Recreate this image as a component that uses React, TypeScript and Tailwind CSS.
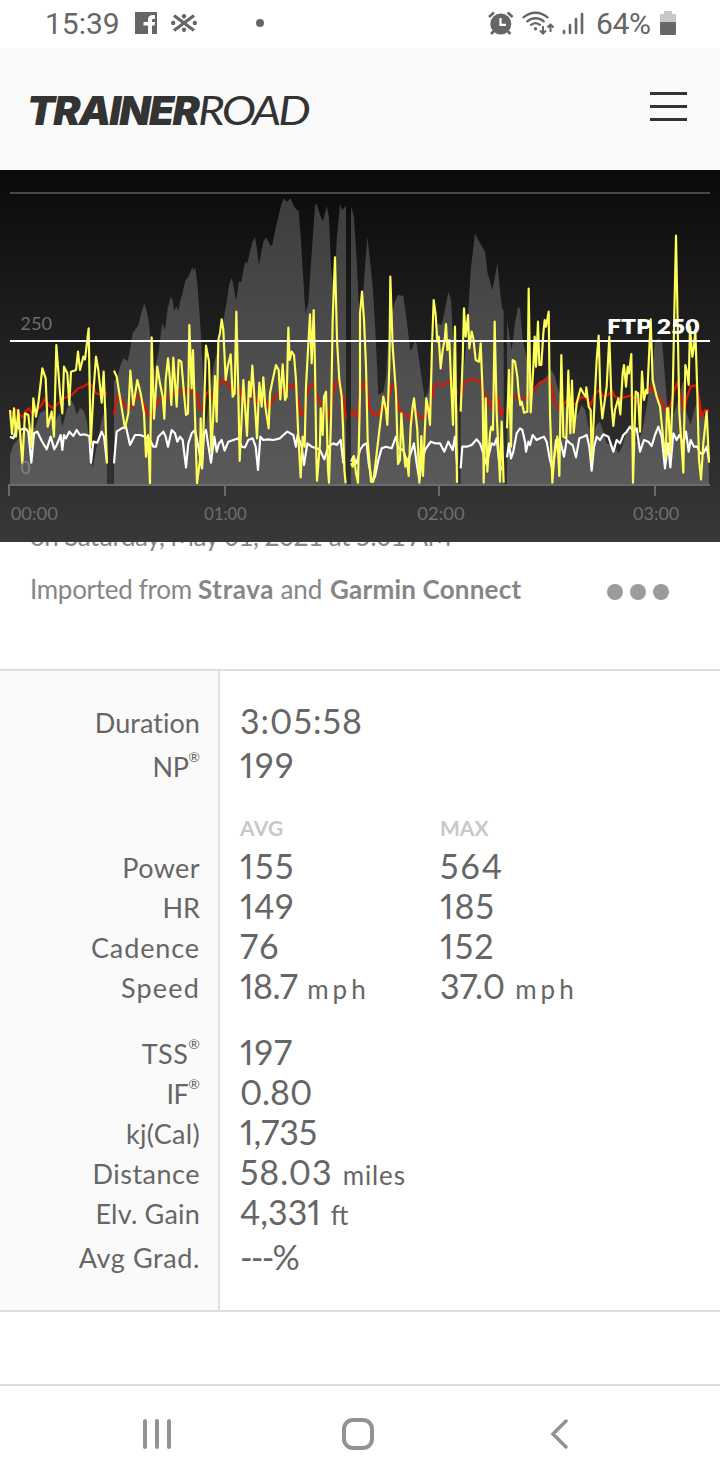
const elevation = [
  '30,912 30,825 40,795 60,770 75,740 95,745 105,745 120,700 135,690 150,720 160,740 172,712 180,700 187,742 200,690 213,660 222,675 230,705 240,685 250,690 260,720 270,800 278,865 290,800 305,720 315,690 321,680 321,912',
  '342,912 342,600 350,600 360,560 370,535 383,543 390,510 398,460 415,435 425,395 433,370 442,400 448,440 455,540 463,570 475,520 487,430 495,450 503,385 512,350 518,360 522,392 530,380 535,392 540,365 545,350 555,305 560,295 565,292 577,262 580,270 586,264 592,310 600,420 607,540 615,700 618,740 625,680 640,560 660,480 674,400 680,365 688,310 695,293 701,320 708,362 712,340 716,305 724,305 735,245 742,250 757,185 765,170 770,200 777,255 783,220 790,185 797,173 803,180 811,197 817,195 830,130 845,70 852,55 860,65 866,60 872,55 880,75 890,90 896,92 903,180 916,400 925,370 935,220 945,75 950,72 957,95 968,125 975,100 980,78 987,110 993,260 1003,350 1010,180 1020,72 1027,90 1038,77 1038,912',
  '1053,912 1053,80 1062,110 1070,240 1080,450 1090,330 1102,170 1110,240 1118,320 1125,430 1135,645 1150,635 1157,600 1170,420 1183,370 1193,345 1210,347 1220,420 1231,512 1237,505 1243,485 1250,490 1257,540 1274,655 1285,635 1295,540 1310,430 1325,435 1333,400 1345,335 1353,360 1360,490 1370,660 1375,700 1375,912',
  '1382,912 1382,650 1400,480 1412,270 1425,160 1435,180 1455,215 1463,280 1477,330 1485,290 1492,248 1500,330 1506,385 1511,390 1511,912',
  '1521,912 1521,420 1530,480 1535,510 1545,430 1554,380 1560,385 1568,480 1577,520 1590,600 1600,640 1620,610 1640,590 1655,570 1665,590 1672,620 1685,660 1700,690 1720,720 1735,700 1745,675 1755,690 1765,740 1780,760 1790,735 1800,725 1810,755 1820,790 1845,800 1855,820 1867,800 1880,750 1890,750 1910,790 1925,760 1940,680 1955,580 1965,480 1980,475 1987,490 2000,660 2010,720 2025,690 2040,640 2050,600 2060,700 2072,735 2080,700 2095,650 2105,700 2125,720 2127,912',
]

const heartRate = [
  '30,700 40,695 50,690 60,705 68,712 75,695 88,685 95,700 110,690 125,675 135,655 145,675 160,685 175,670 190,655 215,645 235,625 250,620 265,610 275,615 288,640 305,645 321,640',
  '342,705 352,645 362,650 375,680 390,685 400,670 412,650 422,650 435,680 448,712 460,700 470,670 480,655 495,658 515,640 540,635 550,625 560,640 575,630 590,640 600,690 610,685 618,640 628,635 640,660 650,625 660,610 670,600 680,610 690,625 705,625 718,625 730,670 740,665 750,640 760,635 770,670 780,640 790,660 800,665 810,685 820,655 830,645 845,630 855,640 865,620 880,615 888,625 895,670 903,705 912,700 920,640 930,620 942,610 950,650 962,670 975,680 982,690 990,715 998,640 1008,605 1018,615 1030,650 1038,715',
  '1053,705 1060,690 1066,700 1075,715 1080,640 1090,608 1100,615 1108,680 1120,705 1135,705 1145,680 1158,690 1168,645 1178,615 1188,620 1195,690 1205,695 1218,700 1230,722 1238,690 1250,700 1265,715 1280,700 1290,690 1300,625 1312,610 1325,615 1345,608 1353,600 1365,615 1371,640',
  '1382,660 1392,610 1405,600 1425,598 1440,605 1452,640 1462,660 1475,685 1485,640 1495,660 1503,705 1511,685',
  '1540,655 1555,645 1565,655 1580,655 1595,640 1608,620 1620,607 1635,600 1648,595 1656,625 1665,670 1680,690 1700,660 1715,675 1730,670 1745,650 1758,655 1772,675 1785,640 1798,630 1810,650 1825,645 1835,630 1845,650 1860,655 1880,650 1895,645 1910,665 1930,650 1945,635 1955,620 1970,645 1985,665 1998,695 2010,680 2020,640 2033,605 2043,655 2052,695 2060,655 2072,620 2088,615 2098,660 2105,710 2115,690 2127,692',
]

const cadence = [
  '30,770 40,775 52,735 60,750 75,745 85,755 94,848 102,760 112,755 125,782 140,808 152,770 163,808 170,795 182,765 187,810 192,765 198,775 208,755 220,768 230,750 240,765 252,763 268,768 273,848 280,785 292,788 305,755 312,770 321,850',
  '342,850 350,755 365,745 378,740 390,795 405,765 420,765 435,770 450,780 460,800 468,800 475,770 490,755 497,770 504,800 515,750 525,760 532,785 540,770 548,780 558,862 565,790 575,760 585,750 595,800 606,865 612,760 618,750 624,790 633,848 643,770 650,815 657,790 665,780 674,812 685,785 700,780 715,775 725,800 735,802 745,780 758,775 767,800 774,870 781,770 790,780 805,778 820,780 840,775 850,765 862,755 880,765 888,800 893,765 905,800 912,855 922,790 935,800 950,805 960,810 973,838 985,800 1000,790 1010,795 1022,780 1030,850',
  '1053,845 1060,830 1070,850 1080,810 1090,795 1100,790 1106,850 1116,905 1125,890 1135,840 1145,805 1158,800 1175,805 1188,770 1195,805 1210,810 1222,850 1232,820 1242,790 1250,850 1258,900 1265,850 1275,810 1292,785 1305,790 1320,790 1333,815 1345,785 1358,810 1365,770 1371,850',
  '1382,865 1387,800 1400,800 1415,795 1430,778 1440,790 1450,820 1457,850 1465,830 1475,790 1483,795 1490,775 1498,850 1505,870',
  '1521,832 1527,790 1533,835 1540,815 1550,760 1560,745 1567,750 1575,785 1578,815 1585,785 1590,795 1598,765 1610,780 1620,775 1632,770 1640,785 1650,840 1658,870 1668,780 1680,780 1692,830 1700,780 1710,790 1718,795 1728,832 1738,775 1750,770 1760,765 1768,800 1775,872 1782,800 1790,770 1800,780 1810,763 1825,770 1840,815 1850,780 1860,790 1870,765 1880,755 1890,740 1900,755 1910,745 1920,815 1932,780 1945,785 1955,798 1965,765 1975,740 1985,770 1995,865 2004,790 2011,862 2020,760 2030,780 2038,765 2050,790 2058,755 2066,815 2072,780 2082,800 2092,800 2100,820 2110,820 2120,800 2127,840',
]

const power = [
  '30,690 36,762 42,685 48,770 55,690 67,850 75,700 85,705 95,800 100,655 108,710 115,670 127,565 137,595 143,740 155,695 162,770 169,495 180,640 187,700 192,560 202,580 208,675 213,575 228,570 234,515 240,570 250,530 255,538 266,445 272,795 280,640 288,530 295,570 305,668 311,575 315,680 321,850',
  '342,572 350,590 358,640 375,745 385,700 391,572 400,675 412,600 422,640 432,700 438,830 444,765 450,910 455,472 462,716 472,560 480,610 488,650 493,716 497,600 504,535 510,600 514,675 520,533 530,680 536,540 544,545 552,640 558,705 564,700 568,435 575,625 579,510 591,910 600,840 602,715 606,860 610,760 618,497 627,545 634,815 640,700 645,588 650,725 655,480 660,460 665,418 670,450 677,600 683,560 692,523 698,650 704,640 709,395 715,640 719,843 730,600 741,768 747,605 752,650 757,557 765,680 771,775 778,608 785,680 790,592 796,680 806,745 810,640 820,590 828,555 836,570 841,658 848,553 855,660 860,650 865,443 869,540 875,515 882,525 888,600 895,770 902,892 908,770 914,800 918,620 924,510 930,403 935,550 941,390 945,560 949,830 951,902 960,790 962,685 968,765 972,650 978,635 984,870 987,908 993,720 998,420 1005,232 1011,480 1018,600 1025,650 1029,740 1033,870 1037,910',
  '1053,850 1058,860 1062,828 1068,880 1074,908 1080,640 1080,400 1086,335 1092,420 1098,560 1103,780 1113,905 1120,905 1130,820 1150,650 1158,690 1162,735 1168,560 1171,290 1178,500 1188,640 1194,852 1200,840 1204,700 1212,820 1216,860 1220,835 1226,888 1232,740 1238,680 1242,655 1252,750 1258,908 1264,768 1269,888 1274,760 1279,655 1285,690 1290,735 1296,500 1301,360 1307,405 1312,485 1316,470 1322,565 1328,510 1334,480 1338,432 1342,510 1348,480 1353,600 1359,735 1365,440 1371,908',
  '1382,695 1388,540 1392,385 1397,470 1404,405 1408,505 1415,455 1420,475 1427,540 1437,545 1442,490 1448,640 1451,908 1457,655 1462,875 1470,760 1474,740 1479,750 1484,425 1490,700 1500,905 1505,725 1511,908',
  '1521,745 1527,570 1533,800 1538,540 1545,545 1552,590 1556,640 1561,675 1565,665 1572,698 1582,695 1586,326 1592,697 1600,560 1604,470 1608,560 1614,425 1618,555 1624,555 1630,460 1634,420 1638,440 1646,395 1650,700 1657,908 1662,840 1672,770 1678,888 1684,525 1690,770 1699,775 1705,572 1711,760 1716,602 1721,758 1730,670 1742,625 1750,640 1757,650 1759,622 1766,680 1772,690 1775,840 1782,700 1790,540 1796,467 1801,640 1807,715 1820,620 1828,470 1835,680 1840,738 1845,690 1855,655 1861,703 1868,580 1872,555 1878,620 1883,560 1887,580 1894,522 1899,908 1907,635 1914,640 1920,755 1926,575 1932,660 1938,630 1942,640 1952,418 1958,600 1970,650 1980,680 1990,780 1997,835 2001,685 2005,685 2011,820 2018,650 2023,400 2028,167 2034,480 2038,700 2045,800 2050,878 2056,555 2062,580 2066,615 2070,440 2077,530 2082,500 2086,450 2092,640 2097,840 2103,898 2110,790 2120,695 2127,848',
]

const ticks = [
  { x: 27, label: '00:00', textX: 32, width: 142 },
  { x: 675, label: '01:00', textX: 613, width: 127 },
  { x: 1317, label: '02:00', textX: 1252, width: 142 },
  { x: 1965, label: '03:00', textX: 1899, width: 139 },
]

function Trace({ lines, color }: { lines: string[]; color: string }) {
  return (
    <g fill="none" stroke={color} strokeWidth="6.500" strokeLinejoin="round">
      {lines.map((points) => (
        <polyline key={points} points={points} />
      ))}
    </g>
  )
}

function RideChart() {
  return (
    <svg viewBox="0 -30 2160 1116" className="block h-[372px] w-full" fontFamily="Lato, sans-serif">
      <defs>
        <linearGradient id="chart-bg" x1="0" y1="0" x2="0" y2="1">
          <stop offset="0" stopColor="#0a0a0a" />
          <stop offset="1" stopColor="#383838" />
        </linearGradient>
      </defs>
      <rect y="-30" width="2160" height="1116" fill="url(#chart-bg)" />
      <path d="M30 39H2130" stroke="#484848" strokeWidth="6" />
      <g fill="#fff" fillOpacity="0.2">
        {elevation.map((points) => (
          <polygon key={points} points={points} />
        ))}
      </g>
      <Trace lines={heartRate} color="#e01505" />
      <Trace lines={cadence} color="#fff" />
      <Trace lines={power} color="#ffff59" />
      <path d="M24 915H2130" stroke="#6a6a6a" strokeWidth="6" />
      <g fill="#6e6e6e">
        {ticks.map((t) => (
          <g key={t.label}>
            <path d={`M${t.x} 912V948`} stroke="#6a6a6a" strokeWidth="6" />
            <text x={t.textX} y="1020" fontSize="50" textLength={t.width} lengthAdjust="spacingAndGlyphs">
              {t.label}
            </text>
          </g>
        ))}
        <text x="61" y="450" fontSize="50" textLength="95" lengthAdjust="spacingAndGlyphs">250</text>
        <text x="62" y="882" fontSize="50" fill="#858585">0</text>
      </g>
      <path d="M30 483H2130" stroke="#fff" strokeWidth="6" />
      <text x="1821" y="461" fontSize="63" fontWeight="800" fill="#fff" textLength="278" lengthAdjust="spacingAndGlyphs">
        FTP 250
      </text>
    </svg>
  )
}

function StatusBar() {
  return (
    <div className="flex h-12 items-center bg-white font-[Roboto,sans-serif] text-[30px] leading-[48px] text-[#666]">
      <span className="ml-[45px] w-[90px]">15:39</span>
      <svg viewBox="0 0 22 22" className="-mt-[2px] h-[22px] w-[22px]">
        <path d="M0 0h22v22h-5v-8.500h2.500l.5-3.500h-3V8.300q0-1.600 1.600-1.600h1.400V3.200q-7-1-7 4.500v2.300H8.500v3.500H13V22H0z" fill="#666" />
      </svg>
      <svg viewBox="0 0 26 18" className="-mt-[2px] ml-[14px] h-[18px] w-[26px]">
        <path d="M3 1.500L23 16.500M23 1.500L3 16.500" stroke="#666" strokeWidth="3.200" />
        <g fill="#666">
          <circle cx="13" cy="2.200" r="2.200" />
          <circle cx="13" cy="15.800" r="2.200" />
          <circle cx="2.200" cy="9" r="2.200" />
          <circle cx="23.800" cy="9" r="2.200" />
        </g>
      </svg>
      <span className="-mt-[2px] ml-[59px] h-2 w-2 rounded-full bg-[#666]" />
      <svg viewBox="0 0 26 24" className="-mt-[2px] ml-[224px] h-6 w-[26px]">
        <circle cx="12.800" cy="13" r="10.500" fill="#666" />
        <path d="M1 6l5-4.500M24.600 6l-5-4.500M6 20l-3 3M19.500 20l3 3" stroke="#666" strokeWidth="2.600" />
        <path d="M12.500 7v6.800h5.500" fill="none" stroke="#fff" strokeWidth="2.200" />
      </svg>
      <svg viewBox="0 0 32 24" className="-mt-[2px] ml-2 h-6 w-8" fill="none" stroke="#666">
        <path d="M.8 7c7.500-7 17.900-7 25.400 0M4.500 11c5.500-5 12.500-5 18 0M8.300 14.500c3.200-2.900 7.200-2.900 10.400 0" strokeWidth="2.300" />
        <circle cx="13.500" cy="17.800" r="1.700" fill="#666" stroke="none" />
        <path d="M21 15v7.500M18 19.500l3 3 3-3M28.500 21v-7M25.500 16.500l3-3 3 3" strokeWidth="2" />
      </svg>
      <svg viewBox="0 0 22 24" className="-mt-[2px] ml-2 h-6 w-[22px]" stroke="#666" strokeWidth="2.600" strokeLinecap="round">
        <path d="M2 20v2M8 14v8M14 8v14M20 3v19" />
      </svg>
      <span className="ml-[12px] w-[64px] tracking-[-0.4px]">64%</span>
      <svg viewBox="0 0 16 24" className="-mt-[2px] h-6 w-4">
        <path d="M4 0h8v3h4v8H0V3h4z" fill="#c8c8c8" />
        <path d="M0 11h16v11.500q0 1.500-1.500 1.500h-13Q0 24 0 22.500z" fill="#666" />
      </svg>
    </div>
  )
}

function Header() {
  return (
    <header className="flex h-[122px] items-center justify-between bg-[#fafafa] pl-[20px] pr-[33px]">
      <svg viewBox="0 0 310 60" className="mt-[4px] h-[60px] w-[310px]" fill="#333" fontStyle="italic">
        <text
          x="7"
          y="44"
          fontFamily="Inter, sans-serif"
          fontSize="40"
          fontWeight="900"
          letterSpacing="-1.800"
          textLength="171"
          lengthAdjust="spacingAndGlyphs"
        >
          TRAINER
        </text>
        <text
          x="178"
          y="44"
          fontFamily="Lato, sans-serif"
          fontSize="40"
          fontWeight="400"
          letterSpacing="-2.500"
          textLength="110"
          lengthAdjust="spacingAndGlyphs"
        >
          ROAD
        </text>
      </svg>
      <button className="-mt-[5px] flex w-[37px] flex-col gap-[10px]" aria-label="Menu">
        <span className="h-[3px] bg-[#333]" />
        <span className="h-[3px] bg-[#333]" />
        <span className="h-[3px] bg-[#333]" />
      </button>
    </header>
  )
}

function Label({ text, reg, tall, track }: { text: string; reg?: boolean; tall?: boolean; track?: string }) {
  return (
    <div className={`${tall ? 'leading-[44px] h-[44px]' : 'leading-[40px] h-[40px]'} whitespace-nowrap text-right text-[27px]`}>
      <span className={track}>{text}</span>
      {reg && <span className="relative -top-[15px] text-[14px] leading-none">®</span>}
    </div>
  )
}

function Value({ text, unit, tall, track, unitTrack }: { text: string; unit?: string; tall?: boolean; track?: string; unitTrack?: string }) {
  return (
    <div className={`${tall ? 'leading-[44px] h-[44px]' : 'leading-[40px] h-[40px]'} whitespace-nowrap text-[34px]`}>
      <span className={track}>{text}</span>
      {unit && <span className={`ml-[10px] text-[26px] leading-none ${unitTrack ?? ''}`}>{unit}</span>}
    </div>
  )
}

function Stats() {
  return (
    <section className="flex h-[643px] border-y-2 border-[#dedede] text-[#666]">
      <div className="w-[220px] border-r-2 border-[#e2e2e2] bg-[#fafafa] pr-[18px] pt-[30px]">
        <Label text="Duration" tall track="tracking-[0.05px]" />
        <Label text="NP" reg tall track="tracking-[-0.5px]" />
        <div className="h-[59px]" />
        <Label text="Power" track="tracking-[0.4px]" />
        <Label text="HR" />
        <Label text="Cadence" track="tracking-[0.9px]" />
        <Label text="Speed" track="tracking-[1.2px]" />
        <div className="h-[26px]" />
        <Label text="TSS" reg track="tracking-[0.5px]" />
        <Label text="IF" reg track="tracking-[-0.5px]" />
        <Label text="kj(Cal)" track="tracking-[0.3px]" />
        <Label text="Distance" track="tracking-[0.5px]" />
        <Label text="Elv. Gain" track="tracking-[0.2px]" />
        <div className="h-[2px]" />
        <Label text="Avg Grad." tall track="tracking-[0.6px]" />
      </div>
      <div className="flex-1 pl-[20px] pt-[28px] proportional-nums">
        <Value text="3:05:58" tall track="tracking-[1px]" />
        <Value text="199" tall track="tracking-[1.5px]" />
        <div className="grid grid-cols-[200px_1fr]">
          <div className="h-[59px] pt-[28px] text-[21px] font-bold leading-[26px] tracking-[0.3px] text-[#c8c8c8]">AVG</div>
          <div className="h-[59px] pt-[28px] text-[21px] font-bold leading-[26px] text-[#c8c8c8]">MAX</div>
          <Value text="155" track="tracking-[1.5px]" />
          <Value text="564" track="tracking-[2px]" />
          <Value text="149" track="tracking-[0.8px]" />
          <Value text="185" track="tracking-[1px]" />
          <Value text="76" track="tracking-[2.5px]" />
          <Value text="152" track="tracking-[1.2px]" />
          <Value text="18.7" track="tracking-[-0.5px]" unit="mph" unitTrack="tracking-[4px]" />
          <Value text="37.0" unit="mph" unitTrack="tracking-[4px]" />
        </div>
        <div className="h-[26px]" />
        <Value text="197" track="tracking-[1px]" />
        <Value text="0.80" />
        <Value text="1,735" />
        <Value text="58.03" track="tracking-[0.9px]" unit="miles" unitTrack="tracking-[0.9px]" />
        <Value text="4,331" unit="ft" unitTrack="tracking-[-0.8px]" />
        <div className="h-[3px]" />
        <Value text="---%" tall track="tracking-[-1.8px]" />
      </div>
    </section>
  )
}

function NavBar() {
  return (
    <nav className="flex h-[96px] items-center border-t-2 border-[#dcdcdc] bg-white pl-[142px] pt-[2px]">
      <svg viewBox="0 0 30 32" className="h-8 w-[30px]" stroke="#929292" strokeWidth="4" strokeLinecap="round">
        <path d="M3 3v26M15 3v26M27 3v26" />
      </svg>
      <svg viewBox="0 0 32 32" className="ml-[170px] h-8 w-8" fill="none" stroke="#929292" strokeWidth="4">
        <rect x="2" y="2" width="28" height="28" rx="9" />
      </svg>
      <svg viewBox="0 0 18 32" className="ml-[176px] h-8 w-[18px]" fill="none" stroke="#929292" strokeWidth="3.500" strokeLinecap="round">
        <path d="M16 3L3 16l13 13" />
      </svg>
    </nav>
  )
}

export default function App() {
  return (
    <main className="flex h-[1480px] w-[720px] flex-col overflow-hidden bg-white font-[Lato,sans-serif]">
      <StatusBar />
      <Header />
      <div className="relative z-10">
        <RideChart />
      </div>
      <div className="h-[127px] px-[30px] text-[26px] text-[#868686]">
        <p className="-mt-[22px] h-[53px] whitespace-nowrap leading-[32px] tracking-[-0.55px]">on Saturday, May 01, 2021 at 5:01 AM</p>
        <div className="flex items-center justify-between">
          <p className="whitespace-nowrap leading-[32px] tracking-[-0.3px]">
            Imported from <b className="tracking-[0.6px]">Strava</b> <span className="tracking-normal">and </span>
            <b className="ml-px tracking-[0.2px]">Garmin Connect</b>
          </p>
          <div className="mr-[21px] mt-[6px] flex gap-[7px]">
            <span className="h-4 w-4 rounded-full bg-[#9b9b9b]" />
            <span className="h-4 w-4 rounded-full bg-[#9b9b9b]" />
            <span className="h-4 w-4 rounded-full bg-[#9b9b9b]" />
          </div>
        </div>
      </div>
      <Stats />
      <div className="flex-1" />
      <NavBar />
    </main>
  )
}
